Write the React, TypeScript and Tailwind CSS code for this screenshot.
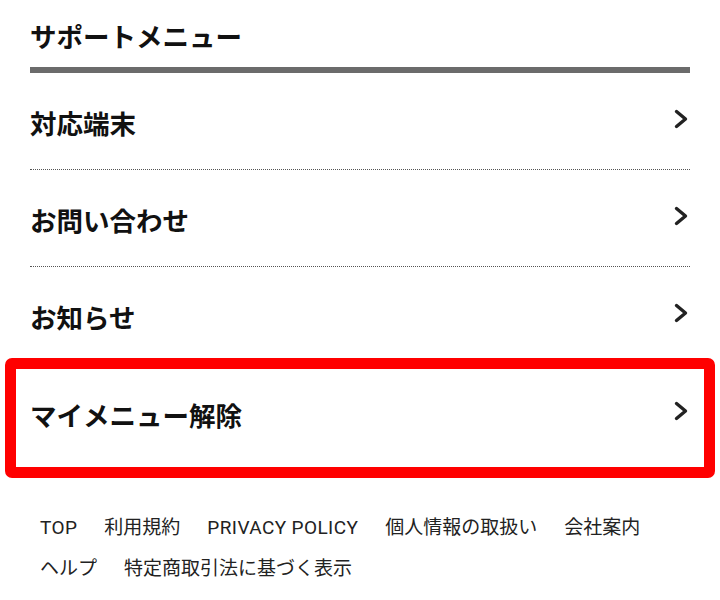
const MENU = ["対応端末", "お問い合わせ", "お知らせ", "マイメニュー解除"];

const FOOTER = [
  "TOP",
  "利用規約",
  "PRIVACY POLICY",
  "個人情報の取扱い",
  "会社案内",
  "ヘルプ",
  "特定商取引法に基づく表示",
];

function Chevron() {
  return (
    <svg width="16" height="20" viewBox="0 0 16 20" fill="none" className="mb-[8px] mr-[1px]">
      <path d="M3.5 2.5 L12.5 10 L3.5 17.5" stroke="#222" strokeWidth="3.4" strokeLinecap="round" strokeLinejoin="round" />
    </svg>
  );
}

export default function App() {
  return (
    <div className="relative w-[720px] h-[600px] overflow-hidden bg-white text-[#111] font-['Roboto','Noto_Sans_CJK_JP',sans-serif]">
      <div className="px-[30px]">
        <h2 className="pt-[16px] text-[26.5px] leading-[39px] font-bold font-['Noto_Sans_CJK_JP',sans-serif]">
          サポートメニュー
        </h2>
        <div className="mt-[12px] h-[6px] bg-[#6b6b6b]" />

        {MENU.map((label, i) => (
          <div
            key={label}
            className={`flex h-[97px] items-center justify-between pt-[4px] ${
              i < MENU.length - 1 ? "border-b border-dotted border-[#555]" : ""
            }`}
          >
            <span className="text-[26.5px] font-bold font-['Noto_Sans_CJK_JP',sans-serif]">{label}</span>
            <Chevron />
          </div>
        ))}
      </div>

      {/* red highlight around the last item */}
      <div className="absolute left-[5px] top-[358px] w-[710px] h-[120px] border-[11px] border-[#ff0000] rounded-[7px] pointer-events-none" />

      <div className="mt-[46px] px-[40px] flex flex-wrap gap-x-[27px] text-[19px] leading-[41px] text-[#222]">
        {FOOTER.map(f => (
          <span key={f} className={/^[A-Z ]+$/.test(f) ? "tracking-[0.4px]" : ""}>{f}</span>
        ))}
      </div>
    </div>
  );
}
